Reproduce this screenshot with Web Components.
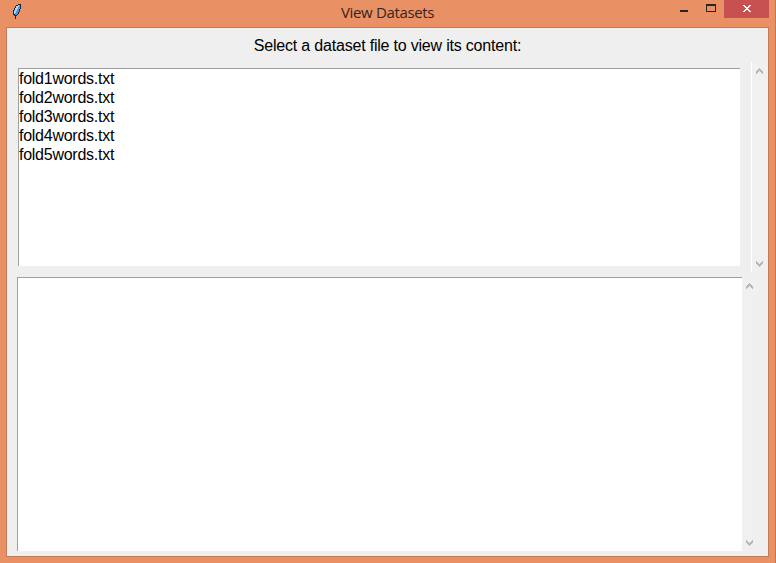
<!DOCTYPE html>
<html lang="en">
<head>
<meta charset="utf-8">
<title>View Datasets</title>
<style>
html, body { margin: 0; height: 100%; overflow: hidden; }
body { font: 16px "Liberation Sans", Arial, sans-serif; color: #000; }
</style>
</head>
<body>
<app-window>
  <title-bar slot="title">View Datasets</title-bar>
  <prompt-label>Select a dataset file to view its content:</prompt-label>
  <file-panel>
    <list-item>fold1words.txt</list-item>
    <list-item>fold2words.txt</list-item>
    <list-item>fold3words.txt</list-item>
    <list-item>fold4words.txt</list-item>
    <list-item>fold5words.txt</list-item>
  </file-panel>
  <content-panel></content-panel>
</app-window>
<script>
function define(name, html) {
  const template = document.createElement('template');
  template.innerHTML = html;
  customElements.define(name, class extends HTMLElement {
    constructor() {
      super();
      this.attachShadow({ mode: 'open' }).append(template.content.cloneNode(true));
    }
  });
}

define('app-window', `
<style>
:host { display: flex; flex-direction: column; box-sizing: border-box; width: 776px; height: 563px;
  background: #e99065; border-right: 1px solid #c07854; padding: 0 6px 6px; }
.client { flex: 1; display: flex; flex-direction: column; border: 1px solid #c37a56; background: #efefef; }
</style>
<slot name="title"></slot>
<div class="client"><slot></slot></div>`);

define('title-bar', `
<style>
:host { display: flex; height: 27px; align-items: flex-start; justify-content: space-between; color: #35251e; }
.side { width: 106px; display: flex; }
.feather { margin: 3px 0 0 5px; }
.title { font: 15px/24px "Open Sans", "Noto Sans", sans-serif; white-space: nowrap; letter-spacing: -0.35px; }
.buttons { justify-content: flex-end; }
</style>
<div class="side"><svg class="feather" width="12" height="17" viewBox="0 0 12 17" shape-rendering="crispEdges">
  <path d="M7 1h3v5h-1v3h-1v2h-1v1h-1v1h-1v3h-1v-3h-1v-1h-1v-5h1v-2h1v-2h1v-1h2z" fill="#1b2836"/>
  <path d="M7 2h2v4h-1v3h-1v2h-1v1h-2v-1h-1v-4h1v-2h1v-2h2z" fill="#4b92e0"/>
  <path d="M7 2h1v2h-1v2h-1v2h-1v2h-1v1h-1v-3h1v-3h1v-2h2z" fill="#b3d3f2"/>
</svg></div>
<div class="title"><slot></slot></div>
<div class="side buttons"><window-buttons></window-buttons></div>`);

define('window-buttons', `
<style>:host { display: block; height: 18px; } svg { display: block; }</style>
<svg width="106" height="18" viewBox="0 0 106 18" shape-rendering="crispEdges">
  <path d="M17 10h8v2h-8z" fill="#272423"/>
  <path d="M43 4h10v8h-10zM44 6v5h8v-5z" fill="#272423" fill-rule="evenodd"/>
  <path d="M61 0h45v18h-45z" fill="#c75050"/>
  <path d="M80 5h2v1h1v1h2v-1h1v-1h2v1h-1v1h-1v1h-1v1h1v1h1v1h1v1h-2v-1h-1v-1h-2v1h-1v1h-2v-1h1v-1h1v-1h1v-1h-1v-1h-1v-1h-1z" fill="#fff"/>
</svg>`);

define('prompt-label', `
<style>:host { display: block; height: 34px; line-height: 36px; text-align: center; white-space: nowrap; letter-spacing: -0.2px; }</style>
<slot></slot>`);

define('list-item', `
<style>:host { display: block; height: 19px; line-height: 20px; white-space: nowrap; letter-spacing: -0.26px; }</style>
<slot></slot>`);

define('scroll-rail', `
<style>
:host { display: flex; flex-direction: column; justify-content: space-between; box-sizing: border-box; background: #f0f0f0; width: 17px; padding: 6px 0 5px 4px; }
svg { display: block; fill: #b8b8b8; }
</style>
<svg width="7" height="6" shape-rendering="crispEdges"><path d="M3 0h1v1h1v1h1v1h1v3h-1v-1h-1v-1h-1v-1h-1v1h-1v1h-1v1h-1v-3h1v-1h1v-1h1z"/></svg>
<svg width="7" height="6" shape-rendering="crispEdges"><path d="M3 6h1v-1h1v-1h1v-1h1v-3h-1v1h-1v1h-1v1h-1v-1h-1v-1h-1v-1h-1v3h1v1h1v1h1z"/></svg>`);

define('file-panel', `
<style>
:host { display: flex; height: 210px; justify-content: space-between; padding-left: 11px; }
.list { box-sizing: border-box; width: 722px; height: 198px; margin-top: 6px; background: #fff;
  border: solid #a0a0a0; border-width: 1px 0 0 1px; }
scroll-rail { border-left: 1px solid #fff; }
</style>
<div class="list"><slot></slot></div><scroll-rail></scroll-rail>`);

define('content-panel', `
<style>
:host { display: flex; flex: 1; padding: 5px 0 5px 10px; }
.text { box-sizing: border-box; width: 725px; background: #fff; border: solid #a0a0a0; border-width: 1px 0 0 1px; }
</style>
<div class="text"></div><scroll-rail></scroll-rail>`);
</script>
</body>
</html>
